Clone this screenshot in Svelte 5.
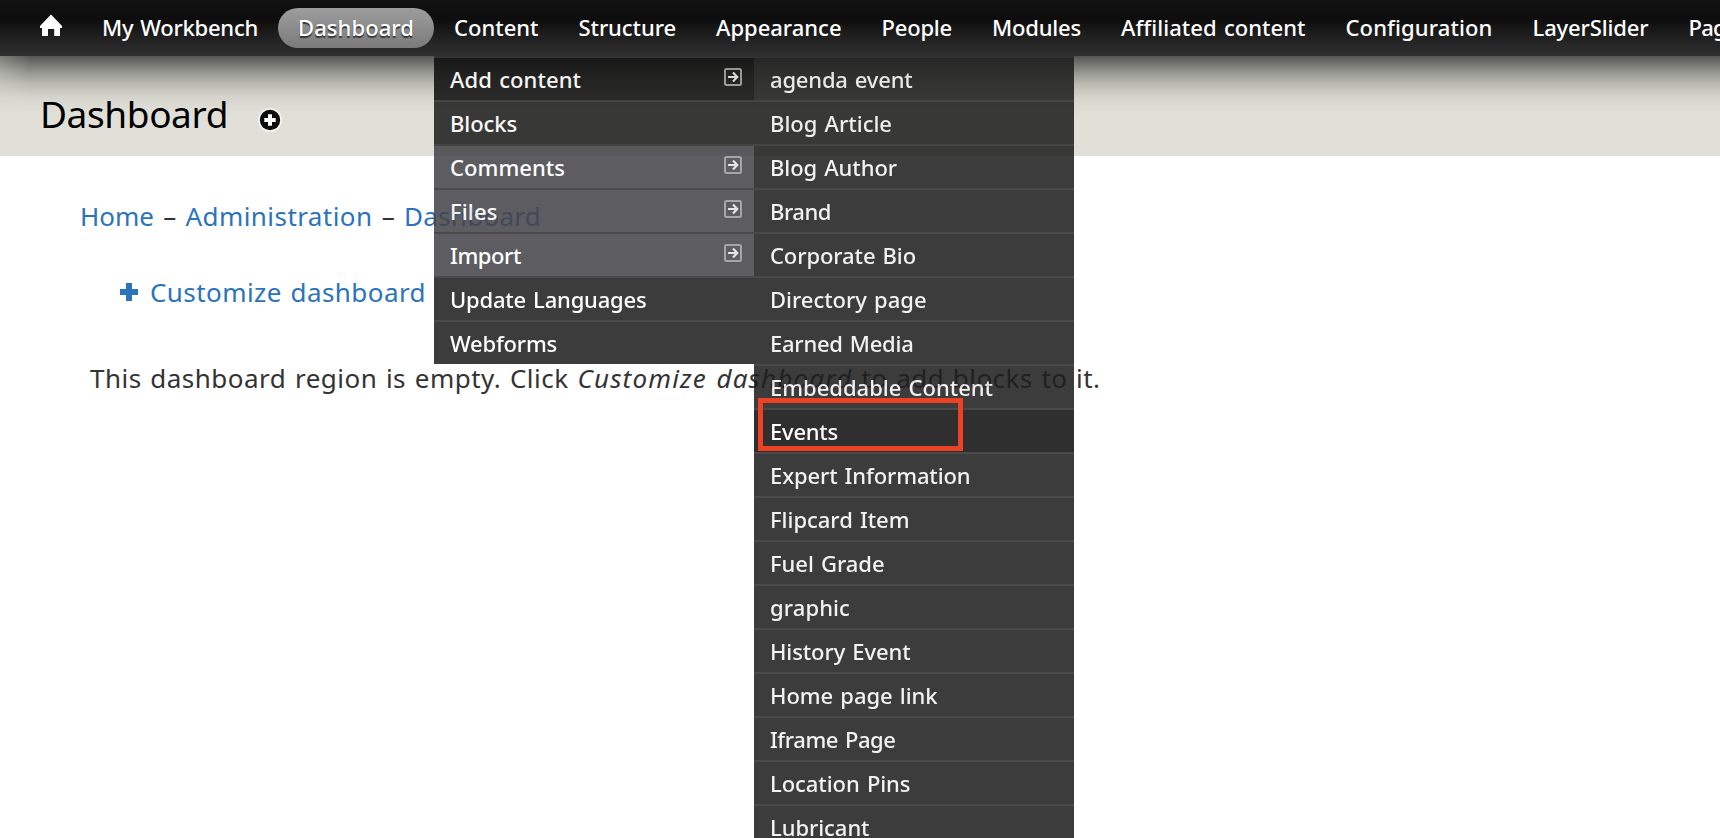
<script>
  // Spreads the letters so that a label takes up the given width.
  function fit(node, width) {
    node.style.letterSpacing = '0px';
    const natural = node.getBoundingClientRect().width;
    const count = node.textContent.length;
    node.style.letterSpacing = `${(width - natural) / count}px`;
  }

  const nav = [
    { label: 'My Workbench', w: 156 },
    { label: 'Dashboard', w: 116, active: true },
    { label: 'Content', w: 84.5 },
    { label: 'Structure', w: 97.5 },
    { label: 'Appearance', w: 125.5 },
    { label: 'People', w: 70.5 },
    { label: 'Modules', w: 89 },
    { label: 'Affiliated content', w: 184.5 },
    { label: 'Configuration', w: 147 },
    { label: 'LayerSlider', w: 116 },
    { label: 'Pages', w: 59 }
  ];

  const menu = [
    { label: 'Add content', w: 131, arrow: true, kind: 'open' },
    { label: 'Blocks', w: 67 },
    { label: 'Comments', w: 115, arrow: true, kind: 'parent' },
    { label: 'Files', w: 47.5, arrow: true, kind: 'parent' },
    { label: 'Import', w: 71, arrow: true, kind: 'parent' },
    { label: 'Update Languages', w: 196.5 },
    { label: 'Webforms', w: 107 }
  ];

  const submenu = [
    { label: 'agenda event', w: 142.5 },
    { label: 'Blog Article', w: 122 },
    { label: 'Blog Author', w: 127 },
    { label: 'Brand', w: 61 },
    { label: 'Corporate Bio', w: 146 },
    { label: 'Directory page', w: 156.5 },
    { label: 'Earned Media', w: 143.5 },
    { label: 'Embeddable Content', w: 223 },
    { label: 'Events', w: 68, kind: 'hover' },
    { label: 'Expert Information', w: 200.5 },
    { label: 'Flipcard Item', w: 139.5 },
    { label: 'Fuel Grade', w: 114.5 },
    { label: 'graphic', w: 80 },
    { label: 'History Event', w: 140.5 },
    { label: 'Home page link', w: 167.5 },
    { label: 'Iframe Page', w: 125.5 },
    { label: 'Location Pins', w: 140.5 },
    { label: 'Lubricant', w: 99.5 }
  ];
</script>

<div class="page">
  <nav class="toolbar">
    <a class="home" href="#home" aria-label="Home">
      <svg width="22" height="22" viewBox="0 0 22 22"><path d="M11 .4 L22 12 V14 H20 V22 H14.2 V15 H8 V22 H2 V14 H0 V12 Z" fill="#fff" /></svg>
    </a>
    {#each nav as item}
      <a class="tab" class:active={item.active} href="#top"><span use:fit={item.w}>{item.label}</span></a>
    {/each}
  </nav>

  <header class="branding">
    <div class="shade"></div>
    <h1><span use:fit={188}>Dashboard</span></h1>
    <svg class="shortcut" width="24" height="24" viewBox="0 0 24 24">
      <circle cx="12" cy="12" r="12" fill="#fff" opacity=".65" />
      <circle cx="12" cy="12" r="10.2" fill="#0c0c0c" />
      <path d="M12 6.3 V17.7 M6.3 12 H17.7" stroke="#fff" stroke-width="4" />
    </svg>
  </header>

  <main>
    <div class="crumbs">
      <a href="#home"><span use:fit={74}>Home</span></a><i>–</i><a href="#admin"><span use:fit={187}>Administration</span></a><i>–</i><a href="#dash"><span use:fit={137}>Dashboard</span></a>
    </div>
    <a class="customize" href="#customize">
      <svg width="18" height="18" viewBox="0 0 18 18"><path d="M6 0 H12 V6 H18 V12 H12 V18 H6 V12 H0 V6 H6 Z" fill="#2b73bb" /></svg>
      <span use:fit={276}>Customize dashboard</span>
    </a>
    <p><span use:fit={478.5}>This dashboard region is empty. Click</span><em use:fit={275}>Customize dashboard</em><span use:fit={239}>to add blocks to it.</span></p>
  </main>

  <div class="dropdown">
    <ul class="first">
      {#each menu as item}
        <li class={item.kind}>
          <span use:fit={item.w}>{item.label}</span>
          {#if item.arrow}
            <svg width="18" height="18" viewBox="0 0 18 18">
              <rect x="1" y="1" width="16" height="16" rx="1.5" fill="none" stroke="#999" stroke-width="2" />
              <path d="M4 9 H13 M9 4.6 L13.2 9 L9 13.4" fill="none" stroke="#e2e2e2" stroke-width="2.2" />
            </svg>
          {/if}
        </li>
      {/each}
    </ul>
    <ul class="second">
      {#each submenu as item}
        <li class={item.kind}><span use:fit={item.w}>{item.label}</span></li>
      {/each}
    </ul>
  </div>
  <div class="marker"></div>
</div>

<style>
  :global(body) { margin: 0; background: #fff; overflow: hidden; }
  .page {
    position: relative;
    width: 1720px;
    height: 838px;
    overflow: hidden;
    font-family: "Noto Sans", "Lucida Grande", sans-serif;
    word-spacing: 1.5px;
    color: #333;
  }
  a { text-decoration: none; color: #2b73bb; }
  span, em { display: inline-block; white-space: pre; }
  .toolbar {
    display: flex;
    align-items: flex-start;
    height: 48px;
    padding: 8px 0 0 20px;
    background: linear-gradient(#111 0, #0d0d0d 20px, #1b1b1b 32px, #303030 56px);
    font-size: 22px;
    font-weight: 500;
  }
  .home { width: 42px; height: 22px; padding: 6px 0 0 20px; flex: none; }
  .home svg { display: block; }
  .tab {
    flex: none;
    height: 40px;
    line-height: 39px;
    padding: 0 20px;
    border-radius: 20px;
    color: #fff;
  }
  .tab.active {
    background: linear-gradient(#9d9d9d, #7b7b7b);
    text-shadow: 0 2px 1px #333;
  }
  .branding {
    position: relative;
    display: flex;
    height: 100px;
    padding-left: 40px;
    background: #e0e0d8;
  }
  .shade {
    position: absolute;
    inset: 0 0 auto 0;
    height: 60px;
    background: linear-gradient(rgba(0,0,0,.62) 0, rgba(0,0,0,.48) 8px, rgba(0,0,0,.32) 17px, rgba(0,0,0,.17) 28px, rgba(0,0,0,.06) 40px, rgba(0,0,0,.015) 50px, transparent 60px);
    mask-image: linear-gradient(90deg, rgba(0,0,0,.7), #000 30px);
  }
  h1 {
    position: relative;
    margin: 33px 0 0;
    font-size: 37px;
    line-height: 50px;
    font-weight: 400;
    color: #000;
  }
  .shortcut { margin: 52px 0 0 30px; }
  main { font-size: 26px; line-height: 36px; font-weight: 450; }
  .crumbs { display: flex; padding: 42px 0 0 80px; }
  .crumbs i { font-style: normal; width: 31.5px; text-align: center; }
  .customize { display: flex; align-items: center; gap: 12px; padding: 40px 0 0 120px; }
  p { display: flex; gap: 9px; margin: 50px 0 0 90px; white-space: nowrap; }
  .dropdown {
    position: absolute;
    left: 434px;
    top: 56px;
    display: flex;
    align-items: flex-start;
    opacity: .87;
    font-size: 22px;
    font-weight: 500;
    color: #fff;
  }
  ul { list-style: none; margin: 0; padding: 0; width: 320px; }
  li {
    display: flex;
    justify-content: space-between;
    box-sizing: border-box;
    height: 44px;
    padding: 0 12px 0 16px;
    line-height: 43px;
    border-top: 2px solid #2e2e2e;
    background: #1f1f1f;
  }
  li svg { margin-top: 10px; }
  .open { background: #0e0e0e; }
  .parent { background: #454449; }
  .hover { background: #0f0f0f; }
  .second { color: #f0f0f0; }
  .second .hover { color: #fff; }
  .marker {
    position: absolute;
    left: 758px;
    top: 398px;
    width: 195px;
    height: 43px;
    border: 5px solid #ed4125;
  }
</style>
